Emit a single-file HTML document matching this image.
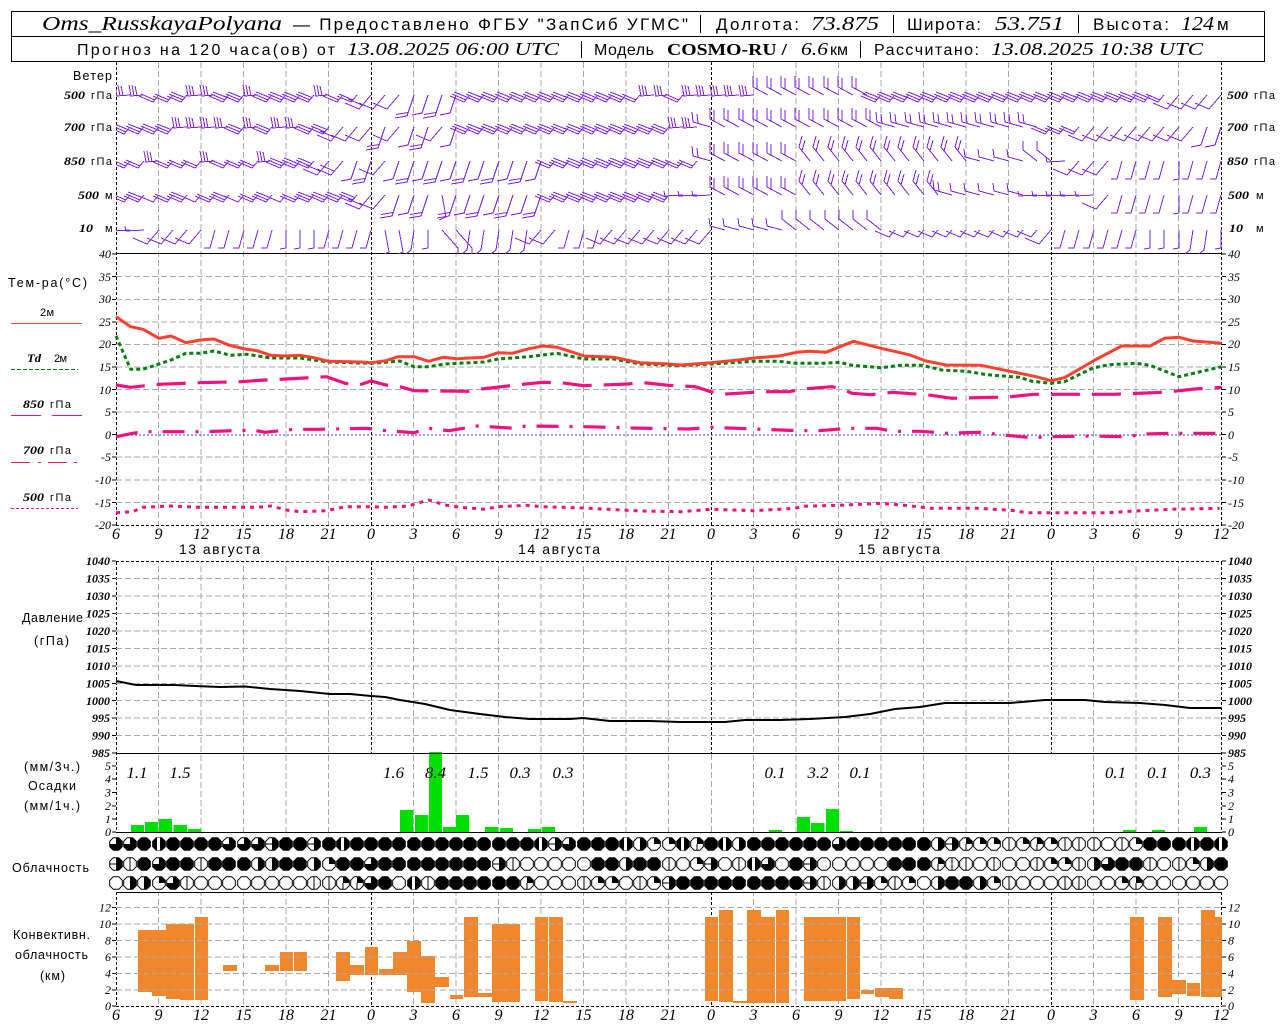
<!DOCTYPE html>
<html lang="ru"><head><meta charset="utf-8"><title>Oms_RusskayaPolyana</title>
<style>
html,body{margin:0;padding:0;background:#fff}
svg{display:block}
text{font-family:"Liberation Sans","DejaVu Sans",sans-serif;fill:#000}
.i{font-family:"Liberation Serif","DejaVu Serif",serif;font-style:italic}
.b{font-family:"Liberation Serif","DejaVu Serif",serif;font-weight:bold}
.t1{font-size:17px}.t2{font-size:16px}
.i.t1{font-size:20px}.i.t2{font-size:18px}.b.t2{font-size:17px}
.n{font-family:"Liberation Serif",serif;font-style:italic;font-size:12px}
.nb{font-family:"Liberation Serif",serif;font-style:italic;font-weight:bold;font-size:12px}
.s{font-size:11px}
.m{font-size:12.5px}
.x{font-family:"Liberation Serif",serif;font-style:italic;font-size:16px}
.c{stroke:#000;stroke-width:1;fill:#fff}
</style></head><body>
<svg xmlns="http://www.w3.org/2000/svg" width="1280" height="1024" viewBox="0 0 1280 1024">
<defs>
<clipPath id="w"><rect x="116" y="62" width="1106" height="192"/></clipPath>
<path id="a" d="M0 0L-14 1M-15 -10L-13 1M-12 -10L-10 .8M-9 -9L-7 .6"/>
<path id="a1" d="M0 0L-18 1L-19 -4"/>
<path id="b" d="M0 0L-6 7L-20 1M-4 5L-18 -1"/>
<path id="t" d="M0 0L-6 7L-20 1M-4 5L-18 -1M-2 2.5L-16 -3"/>
<path id="s" d="M0 0L-6 7L-20 1"/>
<path id="c" d="M0 0L-12 14L-26 8"/>
<path id="v" d="M0 0L-12 14L-26 8M-9 10L-23 4"/>
<path id="d" d="M0 0L-7 21L-19 23M-6 17.5L-18 19.5"/>
<path id="n" d="M0 0L-6 18L-16 20"/>
<path id="e" d="M0 0L-5 18L-11 18"/>
<path id="f" d="M0 0V18L-6 19"/>
<path id="g" d="M0 0L-18 -5L-19 -15M-13 -3.5L-14 -13"/>
<path id="g1" d="M0 0L-15 -4L-16 -12"/>
<path id="h" d="M0 0L-15 -8V-19M-11 -6V-17"/>
<path id="k" d="M0 0L-11 -14L-8 -25M-8 -10L-5 -21"/>
<path id="k1" d="M0 0L-14 -11L-14 -20"/>
<path id="l" d="M0 0L4 22L-3 25"/>
<path id="l1" d="M0 0L16 18V24L10 26"/>
<path id="u" d="M0 0L-3 20L-12 27"/>
<g id="c0"><path class="c" d="M-2.7 -6.3H2.7L6.3 -2.7V2.7L2.7 6.3H-2.7L-6.3 2.7V-2.7Z"/></g>
<g id="c1"><use href="#c0"/><path d="M0 -6.3V6.3" stroke="#000"/></g>
<g id="c2"><use href="#c0"/><path d="M0 0V-6.3H2.7L6.3 -2.7V0Z" fill="#000"/></g>
<g id="c3"><use href="#c2"/><path d="M0 0V6.3" stroke="#000"/></g>
<g id="c4"><use href="#c0"/><path d="M0 -6.3H2.7L6.3 -2.7V2.7L2.7 6.3H0Z" fill="#000"/></g>
<g id="c5"><use href="#c4"/><path d="M-6.3 0H0" stroke="#000"/></g>
<g id="c6"><use href="#c0"/><path d="M0 0H-6.3V2.7L-2.7 6.3H2.7L6.3 2.7V-2.7L2.7 -6.3H0Z" fill="#000"/></g>
<path id="c8" d="M-2.7 -6.3H2.7L6.3 -2.7V2.7L2.7 6.3H-2.7L-6.3 2.7V-2.7Z" fill="#000" stroke="#000"/>
<g id="c7"><use href="#c8"/><rect x="-2" y="-6.3" width="3" height="12.6" fill="#fff"/></g>
</defs>

<!-- vertical grid -->
<path fill="none" stroke="#aaa" stroke-dasharray="6 3" shape-rendering="crispEdges" d="M158.5 62V1006M201 62V1006M243.5 62V1006M286 62V1006M328.5 62V1006M413.5 62V1006M456 62V1006M498.5 62V1006M541 62V1006M583.5 62V1006M626 62V1006M668.5 62V1006M753.5 62V1006M796 62V1006M838.5 62V1006M881 62V1006M923.5 62V1006M966 62V1006M1008.5 62V1006M1093.5 62V1006M1136 62V1006M1178.5 62V1006"/>
<path fill="none" stroke="#000" stroke-dasharray="3 2" shape-rendering="crispEdges" d="M116.5 62V1006M1221.5 62V1006M371.5 62V1006M711.5 62V1006M1051.5 62V1006"/>
<rect x="365" y="754" width="12" height="78" fill="#fff"/>
<rect x="1045" y="754" width="12" height="78" fill="#fff"/>
<rect x="705" y="754" width="12" height="78" fill="#fff"/>
<path d="M711.5 754V832" stroke="#aaa" stroke-dasharray="6 3" shape-rendering="crispEdges"/>
<rect x="0" y="526" width="1280" height="35" fill="#fff"/>
<rect x="0" y="833" width="1280" height="59" fill="#fff"/>

<!-- convective bars -->
<g fill="#f0872d">
<rect x="138" y="930" width="14" height="62"/><rect x="152" y="930" width="14" height="66"/><rect x="166" y="924" width="14" height="75"/><rect x="180" y="924" width="14" height="76"/><rect x="195" y="917" width="13" height="83"/><rect x="223" y="965" width="14" height="6"/><rect x="265" y="965" width="14" height="6"/><rect x="280" y="952" width="13" height="19"/><rect x="294" y="952" width="13" height="19"/><rect x="336" y="952" width="14" height="29"/><rect x="350" y="965" width="14" height="10"/><rect x="365" y="947" width="13" height="28"/><rect x="379" y="969" width="14" height="6"/><rect x="393" y="952" width="14" height="23"/><rect x="407" y="941" width="14" height="51"/><rect x="421" y="956" width="14" height="47"/><rect x="435" y="977" width="14" height="10"/><rect x="450" y="995" width="13" height="4"/><rect x="464" y="917" width="14" height="80"/><rect x="478" y="993" width="14" height="4"/><rect x="492" y="924" width="14" height="78"/><rect x="506" y="924" width="14" height="78"/><rect x="535" y="917" width="13" height="84"/><rect x="549" y="917" width="14" height="85"/><rect x="563" y="1001" width="14" height="2"/>
<rect x="705" y="917" width="13" height="84"/><rect x="719" y="910" width="14" height="92"/><rect x="733" y="1001" width="14" height="2"/><rect x="747" y="910" width="14" height="93"/><rect x="761" y="917" width="14" height="86"/><rect x="776" y="910" width="13" height="93"/><rect x="804" y="917" width="14" height="84"/><rect x="818" y="917" width="14" height="84"/><rect x="832" y="917" width="14" height="84"/><rect x="847" y="917" width="13" height="82"/><rect x="861" y="990" width="13" height="4"/><rect x="875" y="988" width="14" height="9"/><rect x="889" y="988" width="14" height="11"/><rect x="1130" y="917" width="14" height="83"/><rect x="1158" y="917" width="14" height="80"/><rect x="1172" y="980" width="14" height="14"/><rect x="1187" y="983" width="13" height="13"/><rect x="1201" y="910" width="14" height="87"/><rect x="1215" y="917" width="7" height="80"/>
</g>
<!-- precip bars -->
<g fill="#00e000">
<rect x="131" y="825" width="13" height="7"/><rect x="145" y="822" width="13" height="10"/><rect x="159" y="819" width="13" height="13"/><rect x="173.5" y="825" width="13.5" height="7"/><rect x="188" y="829" width="13" height="3"/>
<rect x="400" y="810" width="13" height="22"/><rect x="415" y="815" width="13.5" height="17"/><rect x="429" y="752" width="13" height="80"/><rect x="443" y="827" width="13" height="5"/><rect x="456" y="815" width="13" height="17"/><rect x="485" y="827" width="13" height="5"/><rect x="500" y="828" width="13" height="4"/><rect x="528" y="829" width="13" height="3"/><rect x="542" y="827" width="13" height="5"/>
<rect x="769" y="830" width="13" height="2"/><rect x="797" y="817" width="13" height="15"/><rect x="811" y="823" width="13.5" height="9"/><rect x="826" y="809" width="13" height="23"/><rect x="840" y="831" width="13" height="1"/><rect x="1123" y="830" width="13" height="2"/><rect x="1152" y="830" width="13" height="2"/><rect x="1194" y="827" width="13" height="5"/>
</g>

<!-- horizontal grid -->
<path fill="none" stroke="#aaa" stroke-dasharray="6 3" shape-rendering="crispEdges" d="M116 276.5H1221M116 299.5H1221M116 322H1221M116 344.5H1221M116 367H1221M116 389.5H1221M116 412H1221M116 457H1221M116 480H1221M116 502.5H1221M116 578.5H1221M116 596H1221M116 613.5H1221M116 631H1221M116 648.5H1221M116 666H1221M116 683.5H1221M116 700.5H1221M116 718H1221M116 735.5H1221M116 907.5H1221M116 924H1221M116 940.5H1221M116 957H1221M116 973.5H1221M116 990H1221"/>
<path fill="none" stroke="#000" stroke-dasharray="3 2" shape-rendering="crispEdges" d="M116 525.5H1222M116 561.5H1222M116 1006.5H1222"/>
<path fill="none" stroke="#000" stroke-width="1.3" shape-rendering="crispEdges" d="M116 253.5H1222M116 753.5H1222M116 832.5H1222M116 892.5H1222"/>
<path fill="none" stroke="#000" shape-rendering="crispEdges" d="M112 254H116M112 276.5H116M112 299.5H116M112 322H116M112 344.5H116M112 367H116M112 389.5H116M112 412H116M112 434.5H116M112 457H116M112 480H116M112 502.5H116M112 525H116M1222 254H1226M1222 276.5H1226M1222 299.5H1226M1222 322H1226M1222 344.5H1226M1222 367H1226M1222 389.5H1226M1222 412H1226M1222 434.5H1226M1222 457H1226M1222 480H1226M1222 502.5H1226M1222 525H1226M112 561H116M112 578.5H116M112 596H116M112 613.5H116M112 631H116M112 648.5H116M112 666H116M112 683.5H116M112 700.5H116M112 718H116M112 735.5H116M112 753H116M1222 561H1226M1222 578.5H1226M1222 596H1226M1222 613.5H1226M1222 631H1226M1222 648.5H1226M1222 666H1226M1222 683.5H1226M1222 700.5H1226M1222 718H1226M1222 735.5H1226M1222 753H1226M112 766H116M112 779H116M112 792.5H116M112 806H116M112 819H116M112 832H116M1222 766H1226M1222 779H1226M1222 792.5H1226M1222 806H1226M1222 819H1226M1222 832H1226M112 907.5H116M112 924H116M112 940.5H116M112 957H116M112 973.5H116M112 990H116M112 1006H116M1222 907.5H1226M1222 924H1226M1222 940.5H1226M1222 957H1226M1222 973.5H1226M1222 990H1226M1222 1006H1226"/>

<!-- header -->
<rect x="11.5" y="11.5" width="1253" height="50" fill="none" stroke="#000" shape-rendering="crispEdges"/>
<path d="M11.5 36.5H1264.5M700.5 15V33M893.5 15V33M1078.5 15V33M581.5 41V58M860.5 41V58" stroke="#000" shape-rendering="crispEdges"/>
<text class="i t1" x="42" y="30" textLength="240" lengthAdjust="spacingAndGlyphs">Oms_RusskayaPolyana</text>
<text class="t1" x="293" y="30" textLength="395">— Предоставлено ФГБУ &quot;ЗапСиб УГМС&quot;</text>
<text class="t1" x="716" y="30" textLength="83">Долгота:</text>
<text class="i t1" x="811" y="30" textLength="68" lengthAdjust="spacingAndGlyphs">73.875</text>
<text class="t1" x="907" y="30" textLength="74">Широта:</text>
<text class="i t1" x="995" y="30" textLength="69" lengthAdjust="spacingAndGlyphs">53.751</text>
<text class="t1" x="1093" y="30" textLength="76">Высота:</text>
<text class="i t1" x="1181" y="30" textLength="33" lengthAdjust="spacingAndGlyphs">124</text>
<text class="t1" x="1217" y="30" textLength="11">м</text>
<text class="t2" x="77" y="55" textLength="258">Прогноз на 120 часа(ов) от</text>
<text class="i t2" x="347" y="55" textLength="212" lengthAdjust="spacingAndGlyphs">13.08.2025 06:00 UTC</text>
<text class="t2" x="594" y="55" textLength="60">Модель</text>
<text class="b t2" x="667" y="55" textLength="120" lengthAdjust="spacingAndGlyphs">COSMO-RU /</text>
<text class="i t2" x="801" y="55" textLength="27" lengthAdjust="spacingAndGlyphs">6.6</text>
<text class="t2" x="830" y="55" textLength="18">км</text>
<text class="t2" x="874" y="55" textLength="105">Рассчитано:</text>
<text class="i t2" x="991" y="55" textLength="212" lengthAdjust="spacingAndGlyphs">13.08.2025 10:38 UTC</text>

<!-- wind labels -->
<text class="m" x="73" y="80" textLength="39">Ветер</text>
<g class="s">
<text class="nb" x="64" y="99" textLength="21" lengthAdjust="spacingAndGlyphs">500</text><text class="s" x="91" y="99" textLength="21">гПа</text>
<text class="nb" x="64" y="131" textLength="21" lengthAdjust="spacingAndGlyphs">700</text><text class="s" x="91" y="131" textLength="21">гПа</text>
<text class="nb" x="64" y="165" textLength="21" lengthAdjust="spacingAndGlyphs">850</text><text class="s" x="91" y="165" textLength="21">гПа</text>
<text class="nb" x="78" y="199" textLength="21" lengthAdjust="spacingAndGlyphs">500</text><text class="s" x="105" y="199">м</text>
<text class="nb" x="79" y="232" textLength="14" lengthAdjust="spacingAndGlyphs">10</text><text class="s" x="105" y="232">м</text>
<text class="nb" x="1227" y="99" textLength="21" lengthAdjust="spacingAndGlyphs">500</text><text class="s" x="1254" y="99" textLength="21">гПа</text>
<text class="nb" x="1227" y="131" textLength="21" lengthAdjust="spacingAndGlyphs">700</text><text class="s" x="1254" y="131" textLength="21">гПа</text>
<text class="nb" x="1227" y="165" textLength="21" lengthAdjust="spacingAndGlyphs">850</text><text class="s" x="1254" y="165" textLength="21">гПа</text>
<text class="nb" x="1228" y="199" textLength="21" lengthAdjust="spacingAndGlyphs">500</text><text class="s" x="1256" y="199">м</text>
<text class="nb" x="1229" y="232" textLength="14" lengthAdjust="spacingAndGlyphs">10</text><text class="s" x="1256" y="232">м</text>
</g>

<!-- wind barbs -->
<g clip-path="url(#w)" fill="none" stroke="#8020e0" stroke-width="1" shape-rendering="crispEdges">
<g transform="translate(0,95)">
<use href="#a" x="130"/><use href="#a" x="144"/><use href="#b" x="159"/><use href="#b" x="173"/><use href="#t" x="187"/><use href="#a" x="201"/><use href="#a" x="215"/><use href="#t" x="229"/><use href="#t" x="244"/><use href="#a" x="258"/><use href="#t" x="272"/><use href="#t" x="286"/><use href="#t" x="300"/><use href="#t" x="314"/><use href="#a" x="329"/><use href="#b" x="343"/><use href="#b" x="357"/><use href="#v" x="371"/><use href="#c" x="385"/><use href="#c" x="399"/><use href="#d" x="414"/><use href="#n" x="428"/><use href="#d" x="442"/><use href="#n" x="456"/><use href="#t" x="470"/><use href="#t" x="484"/><use href="#t" x="499"/><use href="#t" x="513"/><use href="#t" x="527"/><use href="#t" x="541"/><use href="#t" x="555"/><use href="#t" x="569"/><use href="#t" x="584"/><use href="#t" x="598"/><use href="#t" x="612"/><use href="#t" x="626"/><use href="#b" x="640"/><use href="#a" x="654"/><use href="#a" x="669"/><use href="#b" x="683"/><use href="#a" x="697"/><use href="#a" x="711"/><use href="#a" x="725"/><use href="#a" x="739"/><use href="#a" x="754"/><use href="#h" x="768"/><use href="#h" x="782"/><use href="#h" x="796"/><use href="#h" x="810"/><use href="#h" x="824"/><use href="#h" x="839"/><use href="#h" x="853"/><use href="#h" x="867"/><use href="#t" x="881"/><use href="#t" x="895"/><use href="#t" x="909"/><use href="#t" x="924"/><use href="#t" x="938"/><use href="#t" x="952"/><use href="#t" x="966"/><use href="#t" x="980"/><use href="#t" x="994"/><use href="#t" x="1009"/><use href="#t" x="1023"/><use href="#t" x="1037"/><use href="#t" x="1051"/><use href="#t" x="1065"/><use href="#t" x="1079"/><use href="#t" x="1094"/><use href="#t" x="1108"/><use href="#t" x="1122"/><use href="#t" x="1136"/><use href="#t" x="1150"/><use href="#b" x="1164"/><use href="#c" x="1179"/><use href="#c" x="1193"/><use href="#c" x="1207"/><use href="#c" x="1221"/>
</g>
<g transform="translate(0,127)">
<use href="#t" x="130"/><use href="#t" x="144"/><use href="#t" x="159"/><use href="#t" x="173"/><use href="#a" x="187"/><use href="#a" x="201"/><use href="#a" x="215"/><use href="#a" x="229"/><use href="#t" x="244"/><use href="#a" x="258"/><use href="#t" x="272"/><use href="#a" x="286"/><use href="#a" x="300"/><use href="#t" x="314"/><use href="#t" x="329"/><use href="#v" x="343"/><use href="#c" x="357"/><use href="#c" x="371"/><use href="#d" x="385"/><use href="#c" x="399"/><use href="#n" x="414"/><use href="#d" x="428"/><use href="#c" x="442"/><use href="#n" x="456"/><use href="#t" x="470"/><use href="#t" x="484"/><use href="#t" x="499"/><use href="#t" x="513"/><use href="#t" x="527"/><use href="#t" x="541"/><use href="#t" x="555"/><use href="#t" x="569"/><use href="#t" x="584"/><use href="#t" x="598"/><use href="#t" x="612"/><use href="#t" x="626"/><use href="#t" x="640"/><use href="#t" x="654"/><use href="#t" x="669"/><use href="#a" x="683"/><use href="#a" x="697"/><use href="#g" x="711"/><use href="#h" x="725"/><use href="#h" x="739"/><use href="#h" x="754"/><use href="#h" x="768"/><use href="#h" x="782"/><use href="#h" x="796"/><use href="#h" x="810"/><use href="#h" x="824"/><use href="#h" x="839"/><use href="#h" x="853"/><use href="#h" x="867"/><use href="#h" x="881"/><use href="#g" x="895"/><use href="#g" x="909"/><use href="#g" x="924"/><use href="#g" x="938"/><use href="#g" x="952"/><use href="#g" x="966"/><use href="#g" x="980"/><use href="#g" x="994"/><use href="#g" x="1009"/><use href="#g" x="1023"/><use href="#g" x="1037"/><use href="#b" x="1051"/><use href="#b" x="1065"/><use href="#b" x="1079"/><use href="#c" x="1094"/><use href="#c" x="1108"/><use href="#c" x="1122"/><use href="#c" x="1136"/><use href="#c" x="1150"/><use href="#c" x="1164"/><use href="#c" x="1179"/><use href="#c" x="1193"/><use href="#n" x="1207"/><use href="#n" x="1221"/>
</g>
<g transform="translate(0,161)">
<use href="#b" x="130"/><use href="#b" x="144"/><use href="#a" x="159"/><use href="#b" x="173"/><use href="#b" x="187"/><use href="#b" x="201"/><use href="#a" x="215"/><use href="#b" x="229"/><use href="#b" x="244"/><use href="#b" x="258"/><use href="#a" x="272"/><use href="#t" x="286"/><use href="#t" x="300"/><use href="#t" x="314"/><use href="#v" x="329"/><use href="#v" x="343"/><use href="#n" x="357"/><use href="#d" x="371"/><use href="#c" x="385"/><use href="#n" x="399"/><use href="#d" x="414"/><use href="#n" x="428"/><use href="#d" x="442"/><use href="#n" x="456"/><use href="#d" x="470"/><use href="#n" x="484"/><use href="#d" x="499"/><use href="#n" x="513"/><use href="#d" x="527"/><use href="#n" x="541"/><use href="#b" x="555"/><use href="#t" x="569"/><use href="#t" x="584"/><use href="#t" x="598"/><use href="#t" x="612"/><use href="#t" x="626"/><use href="#t" x="640"/><use href="#t" x="654"/><use href="#t" x="669"/><use href="#b" x="683"/><use href="#b" x="697"/><use href="#g" x="711"/><use href="#h" x="725"/><use href="#h" x="739"/><use href="#h" x="754"/><use href="#h" x="768"/><use href="#h" x="782"/><use href="#h" x="796"/><use href="#k" x="810"/><use href="#k" x="824"/><use href="#k" x="839"/><use href="#k" x="853"/><use href="#k" x="867"/><use href="#k" x="881"/><use href="#k" x="895"/><use href="#k" x="909"/><use href="#k" x="924"/><use href="#k" x="938"/><use href="#k" x="952"/><use href="#k" x="966"/><use href="#g1" x="980"/><use href="#g1" x="994"/><use href="#g1" x="1009"/><use href="#g1" x="1023"/><use href="#k1" x="1037"/><use href="#k1" x="1051"/><use href="#a1" x="1065"/><use href="#c" x="1079"/><use href="#c" x="1094"/><use href="#c" x="1108"/><use href="#e" x="1122"/><use href="#e" x="1136"/><use href="#e" x="1150"/><use href="#e" x="1164"/><use href="#f" x="1179"/><use href="#e" x="1193"/><use href="#e" x="1207"/><use href="#e" x="1221"/>
</g>
<g transform="translate(0,195)">
<use href="#b" x="130"/><use href="#t" x="144"/><use href="#s" x="159"/><use href="#b" x="173"/><use href="#t" x="187"/><use href="#s" x="201"/><use href="#b" x="215"/><use href="#t" x="229"/><use href="#s" x="244"/><use href="#b" x="258"/><use href="#t" x="272"/><use href="#s" x="286"/><use href="#b" x="300"/><use href="#t" x="314"/><use href="#t" x="329"/><use href="#t" x="343"/><use href="#t" x="357"/><use href="#v" x="371"/><use href="#c" x="385"/><use href="#d" x="399"/><use href="#n" x="414"/><use href="#d" x="428"/><use href="#l" x="442"/><use href="#d" x="456"/><use href="#n" x="470"/><use href="#d" x="484"/><use href="#n" x="499"/><use href="#d" x="513"/><use href="#n" x="527"/><use href="#d" x="541"/><use href="#b" x="555"/><use href="#t" x="569"/><use href="#t" x="584"/><use href="#t" x="598"/><use href="#t" x="612"/><use href="#t" x="626"/><use href="#t" x="640"/><use href="#t" x="654"/><use href="#t" x="669"/><use href="#a1" x="683"/><use href="#a1" x="697"/><use href="#a1" x="711"/><use href="#h" x="725"/><use href="#h" x="739"/><use href="#h" x="754"/><use href="#h" x="768"/><use href="#h" x="782"/><use href="#h" x="796"/><use href="#k" x="810"/><use href="#k" x="824"/><use href="#k" x="839"/><use href="#k" x="853"/><use href="#k" x="867"/><use href="#k" x="881"/><use href="#k" x="895"/><use href="#k" x="909"/><use href="#k" x="924"/><use href="#k" x="938"/><use href="#g" x="952"/><use href="#g1" x="966"/><use href="#g1" x="980"/><use href="#g1" x="994"/><use href="#g1" x="1009"/><use href="#g1" x="1023"/><use href="#a1" x="1037"/><use href="#a1" x="1051"/><use href="#a1" x="1065"/><use href="#a1" x="1079"/><use href="#a1" x="1094"/><use href="#c" x="1108"/><use href="#e" x="1122"/><use href="#e" x="1136"/><use href="#e" x="1150"/><use href="#e" x="1164"/><use href="#f" x="1179"/><use href="#e" x="1193"/><use href="#e" x="1207"/><use href="#e" x="1221"/>
</g>
<g transform="translate(0,230)">
<use href="#a1" x="130"/><use href="#a1" x="144"/><use href="#c" x="159"/><use href="#c" x="173"/><use href="#c" x="187"/><use href="#c" x="201"/><use href="#e" x="215"/><use href="#e" x="229"/><use href="#e" x="244"/><use href="#e" x="258"/><use href="#e" x="272"/><use href="#f" x="286"/><use href="#f" x="300"/><use href="#f" x="314"/><use href="#e" x="329"/><use href="#e" x="343"/><use href="#e" x="357"/><use href="#e" x="371"/><use href="#l" x="385"/><use href="#l" x="399"/><use href="#u" x="414"/><use href="#f" x="428"/><use href="#l1" x="442"/><use href="#l1" x="456"/><use href="#u" x="470"/><use href="#u" x="484"/><use href="#u" x="499"/><use href="#u" x="513"/><use href="#u" x="527"/><use href="#c" x="541"/><use href="#c" x="555"/><use href="#e" x="569"/><use href="#e" x="584"/><use href="#e" x="598"/><use href="#c" x="612"/><use href="#c" x="626"/><use href="#c" x="640"/><use href="#c" x="654"/><use href="#c" x="669"/><use href="#c" x="683"/><use href="#c" x="697"/><use href="#c" x="711"/><use href="#g1" x="725"/><use href="#g1" x="739"/><use href="#g1" x="754"/><use href="#g1" x="768"/><use href="#g1" x="782"/><use href="#k1" x="796"/><use href="#k1" x="810"/><use href="#k1" x="824"/><use href="#k1" x="839"/><use href="#k1" x="853"/><use href="#k1" x="867"/><use href="#k1" x="881"/><use href="#s" x="895"/><use href="#s" x="909"/><use href="#s" x="924"/><use href="#s" x="938"/><use href="#s" x="952"/><use href="#s" x="966"/><use href="#s" x="980"/><use href="#s" x="994"/><use href="#s" x="1009"/><use href="#s" x="1023"/><use href="#s" x="1037"/><use href="#c" x="1051"/><use href="#e" x="1065"/><use href="#e" x="1079"/><use href="#e" x="1094"/><use href="#e" x="1108"/><use href="#e" x="1122"/><use href="#e" x="1136"/><use href="#f" x="1150"/><use href="#f" x="1164"/><use href="#f" x="1179"/><use href="#u" x="1193"/><use href="#u" x="1207"/><use href="#f" x="1221"/>
</g>
</g>

<!-- zero line -->
<path d="M131 435H1221" stroke="#2040ff" stroke-dasharray="2 2" shape-rendering="crispEdges"/>
<!-- temperature curves -->
<g fill="none" stroke-linejoin="round">
<polyline stroke="#f0107f" stroke-width="3" stroke-dasharray="4 5" points="116,512.7 132.6,511.7 143,507.3 171,506 200,507.3 257,507.3 271,506 286,510 300,511.7 326.5,510.7 345,506.7 371,506.7 386,507.3 408,506 428.6,500 445,505 461,507.3 484,509.3 498,506.7 526.5,505.3 543,506.7 584,508 640,511 681,511.7 711,509.3 754,510.7 795,508.3 803,506.3 840,505.3 881,503.3 909,505.7 930,508.3 979,508.3 1015.5,510.7 1026,512.7 1051,512.7 1109,512.7 1130,511.3 1170.6,509.3 1219.6,508.3"/>
<polyline stroke="#f0107f" stroke-width="3.2" stroke-dasharray="22 11 3 11" points="116,436.7 132.6,433.3 143,431.7 204,431.7 253,430 265,432.3 294,429.3 318.4,429.3 367,428.3 386,430.7 414,432.7 428.6,428.3 449,430.7 477.6,426 510,428 526.5,426 584,426.7 640,428.2 689,429 711,427.3 762.4,429.3 799,430.7 819.6,430.7 848,428.3 877,428.3 893,431.3 921.6,431.3 946,433.3 979,432.3 1007,435.3 1032,437.7 1051,436.7 1089,436 1126,436.7 1146,434 1170.6,433.3 1221.6,433.3"/>
<polyline stroke="#f0107f" stroke-width="3.2" stroke-dasharray="29 12" points="116,385 130.6,387.3 159,384.3 200,382.7 241,381.7 265,380 286,379 326.5,376.7 345,383.3 359,385 371,381 386,385 400,386.7 414,390.7 469,391.3 481.6,389 508,386 522.4,384.3 543,382.3 561,382.7 584,385.7 628.6,384 640,382.3 668.6,385.3 695,386.7 711,391.7 721.6,394.3 748,392.7 762.4,391.7 789,391.7 803,389 832,386.7 842,389 852,393.3 870.6,394.7 893,392.3 911.4,393.7 923.7,394.3 952,398.3 993,397.3 1005,397.3 1034,394.3 1113.5,394.3 1154,392.7 1170.6,391.7 1195,389 1221.6,387.3"/>
<polyline stroke="#007f10" stroke-width="3" stroke-dasharray="4 3" points="116,336 130.6,369.3 143,369.3 171,360 186,353.3 200,353.3 214,351 230.6,355.3 247,354.3 271,358 300,358 328.6,362 371,363.3 400,361 414,366.7 428.6,366.7 445,364 484,362 498,359 529,356.7 557,353.3 584,359 614,359 640,364 681,365.7 711,364 754,361.3 779,361.3 795,363.3 824,363.3 840,362.3 852,365.3 881,367.7 901,365.3 921.6,365.3 942,370 966.5,371.3 987,374.7 1019.6,377.3 1032,381.3 1051,383.3 1064.5,381.7 1093,368 1109,364.7 1136,363.3 1150,365.3 1179,376.7 1221.6,366.7"/>
<polyline stroke="#ff4030" stroke-width="3" points="116,316.7 130.6,326.7 143,329.3 159,338.3 171,336 186,342.7 200,340 214,339 228.6,345 245,349 257,350.7 271,355.3 286,356 300,355.3 314,357.7 328.6,361.3 361,362 371,362.7 386,360.7 398,356.7 414,356.7 428.6,361.3 443,357.3 457,358.7 484,357.3 498,352.7 512,353.3 529,348.7 543,346 557,347.3 571,351.7 584,356 614,357.3 640,362.7 664.5,363.7 681,365 711,362.7 738,360 754,358 779,356 797,352.3 809,351.3 826,352.3 840,346.7 853.5,341.3 881,348.3 909,354.7 926,361 946,365 981,365.3 1007,370.7 1036,376.7 1051,380.7 1064.5,377.7 1095,360 1121.6,346 1150,346 1164.5,338.3 1179,337.3 1193,341 1221.6,343.3"/>
<polyline stroke="#000" stroke-width="2" points="116,681 136,685 175,685 195,686 220,687 245,686.5 270,689 300,691 330,694 350,694 371,696 385,697 400,700 425,704 450,710 480,714 505,717 530,719 570,719 583,718 610,721 650,721 680,722 725,722 745,720 780,720 810,719 845,717 870,714 895,709 920,707 945,703 1010,703 1045,700 1085,700 1105,702 1140,703 1165,705 1190,708 1221,708"/>
</g>

<!-- temperature labels -->
<g class="n" text-anchor="end">
<text class="n" x="111" y="258">40</text><text class="n" x="111" y="281">35</text><text class="n" x="111" y="303">30</text><text class="n" x="111" y="326">25</text><text class="n" x="111" y="348">20</text><text class="n" x="111" y="371">15</text><text class="n" x="111" y="394">10</text><text class="n" x="111" y="416">5</text><text class="n" x="111" y="439">0</text><text class="n" x="111" y="461">-5</text><text class="n" x="111" y="484">-10</text><text class="n" x="111" y="507">-15</text><text class="n" x="111" y="529">-20</text>
</g>
<g class="n">
<text class="n" x="1228" y="258">40</text><text class="n" x="1228" y="281">35</text><text class="n" x="1228" y="303">30</text><text class="n" x="1228" y="326">25</text><text class="n" x="1228" y="348">20</text><text class="n" x="1228" y="371">15</text><text class="n" x="1228" y="394">10</text><text class="n" x="1228" y="416">5</text><text class="n" x="1228" y="439">0</text><text class="n" x="1228" y="461">-5</text><text class="n" x="1228" y="484">-10</text><text class="n" x="1228" y="507">-15</text><text class="n" x="1228" y="529">-20</text>
</g>
<!-- pressure labels -->
<g text-anchor="end">
<text class="nb" x="110" y="565">1040</text><text class="nb" x="110" y="582.5">1035</text><text class="nb" x="110" y="600">1030</text><text class="nb" x="110" y="617.5">1025</text><text class="nb" x="110" y="635">1020</text><text class="nb" x="110" y="652.5">1015</text><text class="nb" x="110" y="670">1010</text><text class="nb" x="110" y="687.5">1005</text><text class="nb" x="110" y="705">1000</text><text class="nb" x="110" y="722">995</text><text class="nb" x="110" y="739.5">990</text><text class="nb" x="110" y="757">985</text>
</g>
<g>
<text class="nb" x="1228" y="565">1040</text><text class="nb" x="1228" y="582.5">1035</text><text class="nb" x="1228" y="600">1030</text><text class="nb" x="1228" y="617.5">1025</text><text class="nb" x="1228" y="635">1020</text><text class="nb" x="1228" y="652.5">1015</text><text class="nb" x="1228" y="670">1010</text><text class="nb" x="1228" y="687.5">1005</text><text class="nb" x="1228" y="705">1000</text><text class="nb" x="1228" y="722">995</text><text class="nb" x="1228" y="739.5">990</text><text class="nb" x="1228" y="757">985</text>
</g>
<!-- precip labels -->
<g text-anchor="end">
<text class="n" x="111" y="770">5</text><text class="n" x="111" y="783">4</text><text class="n" x="111" y="796.5">3</text><text class="n" x="111" y="810">2</text><text class="n" x="111" y="823">1</text><text class="n" x="111" y="836">0</text>
<text class="n" x="111" y="911.5">12</text><text class="n" x="111" y="928">10</text><text class="n" x="111" y="944.5">8</text><text class="n" x="111" y="961">6</text><text class="n" x="111" y="977.5">4</text><text class="n" x="111" y="994">2</text><text class="n" x="111" y="1010">0</text>
</g>
<g>
<text class="n" x="1228" y="770">5</text><text class="n" x="1228" y="783">4</text><text class="n" x="1228" y="796.5">3</text><text class="n" x="1228" y="810">2</text><text class="n" x="1228" y="823">1</text><text class="n" x="1228" y="836">0</text>
<text class="n" x="1228" y="911.5">12</text><text class="n" x="1228" y="928">10</text><text class="n" x="1228" y="944.5">8</text><text class="n" x="1228" y="961">6</text><text class="n" x="1228" y="977.5">4</text><text class="n" x="1228" y="994">2</text><text class="n" x="1228" y="1010">0</text>
</g>
<!-- precip sums -->
<g text-anchor="middle">
<text class="x" x="137" y="778" textLength="21" lengthAdjust="spacingAndGlyphs">1.1</text><text class="x" x="180" y="778" textLength="21" lengthAdjust="spacingAndGlyphs">1.5</text><text class="x" x="393.5" y="778" textLength="21" lengthAdjust="spacingAndGlyphs">1.6</text><text class="x" x="435.5" y="778" textLength="21" lengthAdjust="spacingAndGlyphs">8.4</text><text class="x" x="478" y="778" textLength="21" lengthAdjust="spacingAndGlyphs">1.5</text><text class="x" x="520" y="778" textLength="21" lengthAdjust="spacingAndGlyphs">0.3</text><text class="x" x="563" y="778" textLength="21" lengthAdjust="spacingAndGlyphs">0.3</text><text class="x" x="775" y="778" textLength="21" lengthAdjust="spacingAndGlyphs">0.1</text><text class="x" x="818" y="778" textLength="21" lengthAdjust="spacingAndGlyphs">3.2</text><text class="x" x="860" y="778" textLength="21" lengthAdjust="spacingAndGlyphs">0.1</text><text class="x" x="1115.5" y="778" textLength="21" lengthAdjust="spacingAndGlyphs">0.1</text><text class="x" x="1157.6" y="778" textLength="21" lengthAdjust="spacingAndGlyphs">0.1</text><text class="x" x="1200.4" y="778" textLength="21" lengthAdjust="spacingAndGlyphs">0.3</text>
</g>
<!-- x labels -->
<g text-anchor="middle">
<text class="x" x="116" y="539">6</text><text class="x" x="158.5" y="539">9</text><text class="x" x="201" y="539">12</text><text class="x" x="243.5" y="539">15</text><text class="x" x="286" y="539">18</text><text class="x" x="328.5" y="539">21</text><text class="x" x="371" y="539">0</text><text class="x" x="413.5" y="539">3</text><text class="x" x="456" y="539">6</text><text class="x" x="498.5" y="539">9</text><text class="x" x="541" y="539">12</text><text class="x" x="583.5" y="539">15</text><text class="x" x="626" y="539">18</text><text class="x" x="668.5" y="539">21</text><text class="x" x="711" y="539">0</text><text class="x" x="753.5" y="539">3</text><text class="x" x="796" y="539">6</text><text class="x" x="838.5" y="539">9</text><text class="x" x="881" y="539">12</text><text class="x" x="923.5" y="539">15</text><text class="x" x="966" y="539">18</text><text class="x" x="1008.5" y="539">21</text><text class="x" x="1051" y="539">0</text><text class="x" x="1093.5" y="539">3</text><text class="x" x="1136" y="539">6</text><text class="x" x="1178.5" y="539">9</text><text class="x" x="1221" y="539">12</text>
<text class="x" x="116" y="1020">6</text><text class="x" x="158.5" y="1020">9</text><text class="x" x="201" y="1020">12</text><text class="x" x="243.5" y="1020">15</text><text class="x" x="286" y="1020">18</text><text class="x" x="328.5" y="1020">21</text><text class="x" x="371" y="1020">0</text><text class="x" x="413.5" y="1020">3</text><text class="x" x="456" y="1020">6</text><text class="x" x="498.5" y="1020">9</text><text class="x" x="541" y="1020">12</text><text class="x" x="583.5" y="1020">15</text><text class="x" x="626" y="1020">18</text><text class="x" x="668.5" y="1020">21</text><text class="x" x="711" y="1020">0</text><text class="x" x="753.5" y="1020">3</text><text class="x" x="796" y="1020">6</text><text class="x" x="838.5" y="1020">9</text><text class="x" x="881" y="1020">12</text><text class="x" x="923.5" y="1020">15</text><text class="x" x="966" y="1020">18</text><text class="x" x="1008.5" y="1020">21</text><text class="x" x="1051" y="1020">0</text><text class="x" x="1093.5" y="1020">3</text><text class="x" x="1136" y="1020">6</text><text class="x" x="1178.5" y="1020">9</text><text class="x" x="1221" y="1020">12</text>
</g>
<text class="m" x="179" y="554" textLength="81" style="font-size:14px">13 августа</text>
<text class="m" x="518" y="554" textLength="82" style="font-size:14px">14 августа</text>
<text class="m" x="858" y="554" textLength="82" style="font-size:14px">15 августа</text>

<!-- left labels -->
<text class="m" x="8" y="287" textLength="79">Тем-ра(°C)</text>
<text class="s" x="40" y="316" textLength="14">2м</text>
<text class="i" x="27" y="362" style="font-size:12px;font-weight:bold" textLength="14" lengthAdjust="spacingAndGlyphs">Td</text><text class="s" x="54" y="362" textLength="13">2м</text>
<text class="nb" x="23" y="408" textLength="21" lengthAdjust="spacingAndGlyphs">850</text><text class="s" x="50" y="408" textLength="21">гПа</text>
<text class="nb" x="23" y="454" textLength="21" lengthAdjust="spacingAndGlyphs">700</text><text class="s" x="50" y="454" textLength="21">гПа</text>
<text class="nb" x="23" y="501" textLength="21" lengthAdjust="spacingAndGlyphs">500</text><text class="s" x="50" y="501" textLength="21">гПа</text>
<g fill="none" shape-rendering="crispEdges">
<path d="M11 323.5H82" stroke="#ff4030"/>
<path d="M11 369.5H78" stroke="#007f10" stroke-dasharray="4 2"/>
<path d="M11 415.5H41M52 415.5H82" stroke="#f0107f"/>
<path d="M11 462.5H30M38 462.5H41M48 462.5H67M74 462.5H77" stroke="#f0107f"/>
<path d="M11 508.5H78" stroke="#f0107f" stroke-dasharray="3 2"/>
</g>
<text class="m" x="22" y="622" textLength="61">Давление</text>
<text class="m" x="34" y="645" textLength="35">(гПа)</text>
<text class="m" x="24" y="771" textLength="56">(мм/3ч.)</text>
<text class="m" x="28" y="790" textLength="48">Осадки</text>
<text class="m" x="24" y="810" textLength="56">(мм/1ч.)</text>
<text class="m" x="12" y="872" textLength="77">Облачность</text>
<text class="m" x="13" y="939" textLength="77">Конвективн.</text>
<text class="m" x="15" y="959" textLength="73">облачность</text>
<text class="m" x="40" y="980" textLength="25">(км)</text>

<!-- cloud symbols -->
<g transform="translate(0,844)">
<use href="#c6" x="116"/><use href="#c6" x="130"/><use href="#c8" x="144"/><use href="#c7" x="159"/><use href="#c8" x="173"/><use href="#c8" x="187"/><use href="#c8" x="201"/><use href="#c8" x="215"/><use href="#c6" x="229"/><use href="#c6" x="244"/><use href="#c6" x="258"/><use href="#c5" x="272"/><use href="#c8" x="286"/><use href="#c8" x="300"/><use href="#c5" x="314"/><use href="#c8" x="329"/><use href="#c7" x="343"/><use href="#c8" x="357"/><use href="#c8" x="371"/><use href="#c8" x="385"/><use href="#c8" x="399"/><use href="#c8" x="414"/><use href="#c8" x="428"/><use href="#c8" x="442"/><use href="#c8" x="456"/><use href="#c8" x="470"/><use href="#c8" x="484"/><use href="#c8" x="499"/><use href="#c8" x="513"/><use href="#c8" x="527"/><use href="#c7" x="541"/><use href="#c5" x="555"/><use href="#c6" x="569"/><use href="#c8" x="584"/><use href="#c8" x="598"/><use href="#c8" x="612"/><use href="#c7" x="626"/><use href="#c4" x="640"/><use href="#c2" x="654"/><use href="#c2" x="669"/><use href="#c7" x="683"/><use href="#c3" x="697"/><use href="#c8" x="711"/><use href="#c7" x="725"/><use href="#c4" x="739"/><use href="#c8" x="754"/><use href="#c8" x="768"/><use href="#c8" x="782"/><use href="#c8" x="796"/><use href="#c8" x="810"/><use href="#c8" x="824"/><use href="#c6" x="839"/><use href="#c8" x="853"/><use href="#c8" x="867"/><use href="#c8" x="881"/><use href="#c8" x="895"/><use href="#c8" x="909"/><use href="#c8" x="924"/><use href="#c4" x="938"/><use href="#c5" x="952"/><use href="#c3" x="966"/><use href="#c2" x="980"/><use href="#c2" x="994"/><use href="#c1" x="1009"/><use href="#c2" x="1023"/><use href="#c3" x="1037"/><use href="#c2" x="1051"/><use href="#c1" x="1065"/><use href="#c1" x="1079"/><use href="#c1" x="1094"/><use href="#c0" x="1108"/><use href="#c1" x="1122"/><use href="#c2" x="1136"/><use href="#c8" x="1150"/><use href="#c8" x="1164"/><use href="#c8" x="1179"/><use href="#c7" x="1193"/><use href="#c8" x="1207"/><use href="#c7" x="1221"/>
</g>
<g transform="translate(0,864)">
<use href="#c5" x="116"/><use href="#c1" x="130"/><use href="#c8" x="144"/><use href="#c6" x="159"/><use href="#c8" x="173"/><use href="#c8" x="187"/><use href="#c1" x="201"/><use href="#c8" x="215"/><use href="#c8" x="229"/><use href="#c8" x="244"/><use href="#c4" x="258"/><use href="#c4" x="272"/><use href="#c8" x="286"/><use href="#c8" x="300"/><use href="#c4" x="314"/><use href="#c2" x="329"/><use href="#c8" x="343"/><use href="#c8" x="357"/><use href="#c6" x="371"/><use href="#c8" x="385"/><use href="#c8" x="399"/><use href="#c8" x="414"/><use href="#c8" x="428"/><use href="#c8" x="442"/><use href="#c8" x="456"/><use href="#c8" x="470"/><use href="#c8" x="484"/><use href="#c5" x="499"/><use href="#c1" x="513"/><use href="#c0" x="527"/><use href="#c0" x="541"/><use href="#c0" x="555"/><use href="#c0" x="569"/><use href="#c0" x="584"/><use href="#c8" x="598"/><use href="#c8" x="612"/><use href="#c4" x="626"/><use href="#c8" x="640"/><use href="#c8" x="654"/><use href="#c1" x="669"/><use href="#c0" x="683"/><use href="#c2" x="697"/><use href="#c5" x="711"/><use href="#c0" x="725"/><use href="#c1" x="739"/><use href="#c7" x="754"/><use href="#c6" x="768"/><use href="#c0" x="782"/><use href="#c8" x="796"/><use href="#c5" x="810"/><use href="#c0" x="824"/><use href="#c0" x="839"/><use href="#c0" x="853"/><use href="#c0" x="867"/><use href="#c0" x="881"/><use href="#c8" x="895"/><use href="#c8" x="909"/><use href="#c8" x="924"/><use href="#c3" x="938"/><use href="#c1" x="952"/><use href="#c1" x="966"/><use href="#c0" x="980"/><use href="#c1" x="994"/><use href="#c0" x="1009"/><use href="#c0" x="1023"/><use href="#c1" x="1037"/><use href="#c2" x="1051"/><use href="#c2" x="1065"/><use href="#c1" x="1079"/><use href="#c4" x="1094"/><use href="#c6" x="1108"/><use href="#c8" x="1122"/><use href="#c8" x="1136"/><use href="#c1" x="1150"/><use href="#c0" x="1164"/><use href="#c1" x="1179"/><use href="#c2" x="1193"/><use href="#c4" x="1207"/><use href="#c8" x="1221"/>
</g>
<g transform="translate(0,883)">
<use href="#c0" x="116"/><use href="#c4" x="130"/><use href="#c4" x="144"/><use href="#c2" x="159"/><use href="#c6" x="173"/><use href="#c1" x="187"/><use href="#c0" x="201"/><use href="#c0" x="215"/><use href="#c0" x="229"/><use href="#c0" x="244"/><use href="#c0" x="258"/><use href="#c0" x="272"/><use href="#c0" x="286"/><use href="#c0" x="300"/><use href="#c1" x="314"/><use href="#c1" x="329"/><use href="#c3" x="343"/><use href="#c3" x="357"/><use href="#c6" x="371"/><use href="#c8" x="385"/><use href="#c0" x="399"/><use href="#c7" x="414"/><use href="#c1" x="428"/><use href="#c8" x="442"/><use href="#c8" x="456"/><use href="#c8" x="470"/><use href="#c8" x="484"/><use href="#c8" x="499"/><use href="#c8" x="513"/><use href="#c3" x="527"/><use href="#c0" x="541"/><use href="#c0" x="555"/><use href="#c0" x="569"/><use href="#c1" x="584"/><use href="#c2" x="598"/><use href="#c2" x="612"/><use href="#c0" x="626"/><use href="#c1" x="640"/><use href="#c2" x="654"/><use href="#c5" x="669"/><use href="#c8" x="683"/><use href="#c8" x="697"/><use href="#c8" x="711"/><use href="#c8" x="725"/><use href="#c8" x="739"/><use href="#c8" x="754"/><use href="#c8" x="768"/><use href="#c8" x="782"/><use href="#c8" x="796"/><use href="#c5" x="810"/><use href="#c1" x="824"/><use href="#c4" x="839"/><use href="#c4" x="853"/><use href="#c5" x="867"/><use href="#c2" x="881"/><use href="#c1" x="895"/><use href="#c2" x="909"/><use href="#c0" x="924"/><use href="#c4" x="938"/><use href="#c8" x="952"/><use href="#c8" x="966"/><use href="#c4" x="980"/><use href="#c2" x="994"/><use href="#c1" x="1009"/><use href="#c0" x="1023"/><use href="#c0" x="1037"/><use href="#c0" x="1051"/><use href="#c1" x="1065"/><use href="#c1" x="1079"/><use href="#c0" x="1094"/><use href="#c0" x="1108"/><use href="#c2" x="1122"/><use href="#c3" x="1136"/><use href="#c0" x="1150"/><use href="#c0" x="1164"/><use href="#c0" x="1179"/><use href="#c0" x="1193"/><use href="#c0" x="1207"/><use href="#c0" x="1221"/>
</g>
</svg>
</body></html>
